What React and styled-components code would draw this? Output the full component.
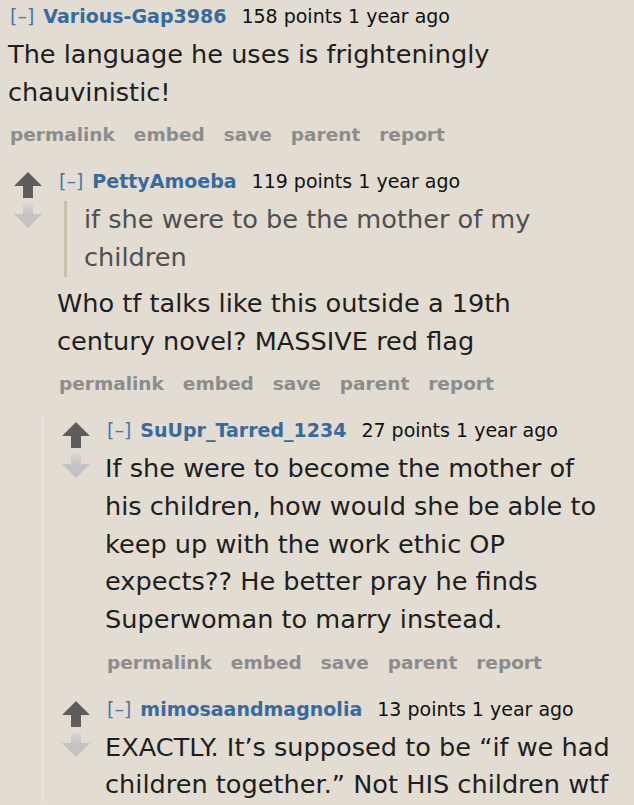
import React from 'react';
import styled, { createGlobalStyle } from 'styled-components';

const Global = createGlobalStyle`
  html, body { margin: 0; padding: 0; background: #e2dcd3; }
  body { font-family: "DejaVu Sans", Verdana, sans-serif; }
  * { box-sizing: border-box; }
`;

const Page = styled.div`
  padding: 4px 0 0 8px;
  height: 805px;
  overflow: hidden;
`;

const CommentBox = styled.div`
  display: flex;
  flex-direction: column;
  & + & { margin-top: 22px; }
`;

const Row = styled.div`
  display: flex;
  align-items: flex-start;
`;

const Midcol = styled.div`
  width: 28px;
  flex: none;
  margin-top: ${p => p.$top}px;
  margin-right: 15px;
  display: flex;
  flex-direction: column;
  gap: 5px;
`;

const Entry = styled.div`
  flex: 1;
  min-width: 0;
`;

const Tagline = styled.div`
  font-size: 19px;
  line-height: 24px;
  color: #111;
  white-space: nowrap;
`;

const Expand = styled.span`
  color: #4a78aa;
  margin-left: 2px;
  margin-right: 9px;
`;

const Author = styled.span`
  color: #3a6a9c;
  font-weight: bold;
  margin-right: 15px;
`;

const Body = styled.div`
  margin-top: 8px;
  font-size: 25.6px;
  line-height: 37.7px;
  color: #1e1e1e;
  display: flex;
  flex-direction: column;
  gap: 8px;
`;

const Para = styled.p`
  margin: 0;
`;

const Quote = styled.blockquote`
  margin: 0 0 0 7px;
  border-left: 3px solid #c8c1b0;
  padding-left: 17px;
  color: #4f4f4f;
`;

const Actions = styled.ul`
  list-style: none;
  margin: 12px 0 0;
  padding: 0 0 0 2px;
  display: flex;
  gap: 19px;
  font-size: 18.5px;
  line-height: 24px;
  font-weight: bold;
  color: #8c8c8c;
`;

const Child = styled.div`
  margin-top: 22px;
  margin-left: ${p => p.$ml}px;
  padding-left: ${p => p.$pl}px;
  border-left: ${p => (p.$line ? '1px dotted #f2f2fa' : 'none')};
`;

const UpArrow = () => (
  <svg width="28" height="26" viewBox="0 0 28 26">
    <path d="M14 0 L28 14 L19 14 L19 26 L9 26 L9 14 L0 14 Z" fill="#5d5d5d" />
  </svg>
);

const DownArrow = () => (
  <svg width="28" height="26" viewBox="0 0 28 26">
    <defs>
      <linearGradient id="dg" x1="0" y1="0" x2="0" y2="1">
        <stop offset="0" stopColor="#dcd8d2" />
        <stop offset="0.45" stopColor="#c4c4c4" />
        <stop offset="1" stopColor="#c2c2c2" />
      </linearGradient>
    </defs>
    <path d="M9 0 L19 0 L19 11 L28 11 L14 25 L0 11 L9 11 Z" fill="url(#dg)" />
  </svg>
);

const Lines = ({ lines }) =>
  lines.map((l, i) => (
    <React.Fragment key={i}>
      {i > 0 && <br />}
      {l}
    </React.Fragment>
  ));

const ACTIONS = ['permalink', 'embed', 'save', 'parent', 'report'];

function Comment({ author, points, votes = true, arrowTop = 3, children, replies, childProps }) {
  return (
    <CommentBox>
      <Row>
        {votes && (
          <Midcol $top={arrowTop}>
            <UpArrow />
            <DownArrow />
          </Midcol>
        )}
        <Entry>
          <Tagline>
            <Expand>[–]</Expand>
            <Author>{author}</Author>
            {points} points 1 year ago
          </Tagline>
          <Body>{children}</Body>
          <Actions>
            {ACTIONS.map(a => (
              <li key={a}>{a}</li>
            ))}
          </Actions>
        </Entry>
      </Row>
      {replies && <Child {...childProps}>{replies}</Child>}
    </CommentBox>
  );
}

export default function App() {
  return (
    <>
      <Global />
      <Page>
        <Comment
          author="Various-Gap3986"
          points={158}
          votes={false}
          childProps={{ $ml: 6, $pl: 0 }}
          replies={
            <Comment
              author="PettyAmoeba"
              points={119}
              childProps={{ $ml: 28, $pl: 19, $line: true }}
              replies={
                <>
                  <Comment author="SuUpr_Tarred_1234" points={27} arrowTop={4}>
                    <Para>
                      <Lines
                        lines={[
                          'If she were to become the mother of',
                          'his children, how would she be able to',
                          'keep up with the work ethic OP',
                          'expects?? He better pray he finds',
                          'Superwoman to marry instead.',
                        ]}
                      />
                    </Para>
                  </Comment>
                  <Comment author="mimosaandmagnolia" points={13} arrowTop={4}>
                    <Para>
                      <Lines
                        lines={[
                          'EXACTLY. It’s supposed to be “if we had',
                          'children together.” Not HIS children wtf',
                        ]}
                      />
                    </Para>
                  </Comment>
                </>
              }
            >
              <Quote>
                <Para>
                  <Lines lines={['if she were to be the mother of my', 'children']} />
                </Para>
              </Quote>
              <Para>
                <Lines lines={['Who tf talks like this outside a 19th', 'century novel? MASSIVE red flag']} />
              </Para>
            </Comment>
          }
        >
          <Para>
            <Lines lines={['The language he uses is frighteningly', 'chauvinistic!']} />
          </Para>
        </Comment>
      </Page>
    </>
  );
}
